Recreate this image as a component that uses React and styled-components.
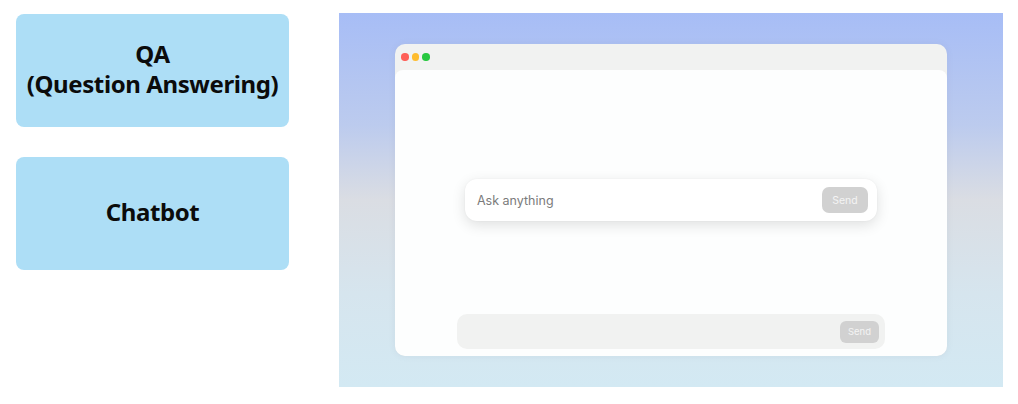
import React from 'react'
import styled, { createGlobalStyle } from 'styled-components'

const GlobalStyle = createGlobalStyle`
  html, body {
    margin: 0;
    padding: 0;
    background: #ffffff;
  }
`

const modes = [
  { id: 'qa', lines: ['QA', '(Question Answering)'] },
  { id: 'chat', lines: ['Chatbot'] },
]

const traffic = ['#fe5f57', '#febc2e', '#28c840']

export default function App() {
  return (
    <>
      <GlobalStyle />
      <Page>
        <ModeList>
          {modes.map((m) => (
            <ModeCard key={m.id}>
              {m.lines.map((l, i) => <span key={i}>{l}</span>)}
            </ModeCard>
          ))}
        </ModeList>
        <Stage>
          <Window>
            <TitleBar>
              {traffic.map((c) => <Dot key={c} color={c} />)}
            </TitleBar>
            <WindowBody>
              <ChatArea>
                <AskCard>
                  <AskText>Ask anything</AskText>
                  <SendButton>Send</SendButton>
                </AskCard>
              </ChatArea>
              <Composer>
                <SendButton small>Send</SendButton>
              </Composer>
            </WindowBody>
          </Window>
        </Stage>
      </Page>
    </>
  )
}

const Page = styled.div`
  width: 1018px;
  height: 404px;
  display: flex;
  align-items: flex-start;
`

const ModeList = styled.div`
  display: flex;
  flex-direction: column;
  gap: 30px;
  padding: 14px 0 0 16px;
`

const ModeCard = styled.div`
  width: 273px;
  height: 113px;
  box-sizing: border-box;
  padding-bottom: 4px;
  background: #addef6;
  border-radius: 8px;
  display: flex;
  flex-direction: column;
  align-items: center;
  justify-content: center;
  font-family: 'Noto Sans', sans-serif;
  font-weight: 700;
  font-size: 24px;
  letter-spacing: -0.4px;
  line-height: 30px;
  color: #0b0b0b;
`

const Stage = styled.div`
  margin: 13px 0 0 50px;
  width: 664px;
  height: 374px;
  box-sizing: border-box;
  padding: 31px 56px;
  background: linear-gradient(180deg, #a7bdf6 0%, #bccbee 30%, #dadde3 50%, #d6e5ee 75%, #d3e9f3 100%);
`

const Window = styled.div`
  height: 100%;
  display: flex;
  flex-direction: column;
  background: #f1f2f1;
  border-radius: 10px;
  overflow: hidden;
  box-shadow: 0 0 6px rgba(120, 130, 160, 0.12);
`

const TitleBar = styled.div`
  height: 26px;
  flex: none;
  display: flex;
  align-items: center;
  gap: 3px;
  padding: 0 0 0 6px;
`

const Dot = styled.span`
  width: 7.5px;
  height: 7.5px;
  border-radius: 50%;
  background: ${(p) => p.color};
`

const WindowBody = styled.div`
  flex: 1;
  background: #fdfefe;
  border-radius: 8px 8px 10px 10px;
  display: flex;
  flex-direction: column;
  align-items: center;
  padding-bottom: 7px;
`

const ChatArea = styled.div`
  flex: 1;
  padding-top: 109px;
`

const AskCard = styled.div`
  width: 412px;
  height: 42px;
  box-sizing: border-box;
  background: #ffffff;
  border-radius: 12px;
  box-shadow: 0 4px 14px rgba(0, 0, 0, 0.12), 0 0 2px rgba(0, 0, 0, 0.05);
  display: flex;
  align-items: center;
  justify-content: space-between;
  padding: 0 9px 0 12px;
`

const AskText = styled.span`
  font-family: Inter, 'Noto Sans', sans-serif;
  font-size: 12.5px;
  color: #7b7b7b;
`

const SendButton = styled.span`
  display: flex;
  align-items: center;
  justify-content: center;
  width: ${(p) => (p.small ? '39px' : '46px')};
  height: ${(p) => (p.small ? '22px' : '26px')};
  border-radius: ${(p) => (p.small ? '6px' : '7px')};
  background: #d1d1d1;
  color: #f4f4f4;
  font-family: Inter, 'Noto Sans', sans-serif;
  font-size: ${(p) => (p.small ? '9.5px' : '10.5px')};
`

const Composer = styled.div`
  width: 428px;
  height: 35px;
  box-sizing: border-box;
  background: #f1f2f1;
  border-radius: 10px;
  display: flex;
  align-items: center;
  justify-content: flex-end;
  padding-right: 6px;
`
